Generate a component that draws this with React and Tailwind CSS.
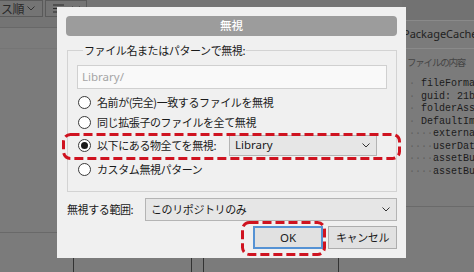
import React from "react";

function Chevron({ className = "" }) {
  return (
    <svg width="8" height="5" viewBox="0 0 8 5" className={className}>
      <path d="M0.5 0.5 L4 4 L7.5 0.5" fill="none" stroke="currentColor" strokeWidth="1" />
    </svg>
  );
}

function Radio({ checked }) {
  return (
    <span className="ml-[1px] w-[13px] h-[13px] rounded-full border border-[#3a3a3a] bg-white flex items-center justify-center shrink-0">
      {checked && <span className="w-[7px] h-[7px] rounded-full bg-[#1a1a1a]" />}
    </span>
  );
}

function Select({ text, className = "" }) {
  return (
    <div
      className={`flex items-center justify-between border border-[#b4b4b4] bg-[#e6e6e6] pl-[5px] pr-[6px] ${className}`}
    >
      <span className="leading-none">{text}</span>
      <Chevron className="text-[#333]" />
    </div>
  );
}

function DashBox({ className, w, h }) {
  return (
    <svg width={w} height={h} className={`absolute ${className}`} viewBox={`0 0 ${w} ${h}`}>
      <rect
        x="1.5"
        y="1.5"
        width={w - 3}
        height={h - 3}
        rx="7"
        fill="none"
        stroke="#cf1320"
        strokeWidth="3"
        strokeDasharray="9 4"
      />
    </svg>
  );
}

const code = [
  { ind: false, t: "fileFormatVersion: 2" },
  { ind: false, t: "guid: 21b4c7e0a9" },
  { ind: false, t: "folderAsset: yes" },
  { ind: false, t: "DefaultImporter:" },
  { ind: true, t: "externalObjects: {}" },
  { ind: true, t: "userData:" },
  { ind: true, t: "assetBundleName:" },
  { ind: true, t: "assetBundleVariant:" },
];

export default function App() {
  return (
    <div className="relative w-[474px] h-[272px] overflow-hidden bg-[#7b7b7b] font-['Noto_Sans_CJK_JP',sans-serif] text-[#1e1e1e]">
      <div className="flex h-full">
        {/* left panel */}
        <div className="w-[402px] flex flex-col shrink-0">
          <div className="h-[29px] border-b border-[#686868] bg-[#747474] flex items-start gap-[2px]">
            <div className="h-[17px] w-[44px] ml-[-1px] border border-[#5a5a5a] flex items-center justify-between pl-[1px] pr-[7px] text-[12px] text-[#2a2a2a]">
              <span className="leading-none tracking-[-0.5px]">ス順</span>
              <Chevron className="text-[#333]" />
            </div>
            <div className="h-[17px] w-[42px] border border-[#5a5a5a] flex items-center justify-between pl-[7px] pr-[6px] text-[#2a2a2a]">
              <svg width="11" height="9" viewBox="0 0 11 9">
                <path d="M0 1 H11 M0 4.5 H11 M0 8 H11" stroke="#2a2a2a" strokeWidth="1.2" />
              </svg>
              <Chevron className="text-[#333]" />
            </div>
          </div>
          <div className="h-[21px] border-b border-[#757575]" />
          <div className="h-[189px] border-b border-[#696969]" />
          <div className="pt-[19px] flex">
            <div className="ml-[73px] w-[119px] h-[20px] border-t-2 border-x border-[#333]" />
            <div className="ml-[11px] w-[136px] h-[20px] border-t-2 border-x border-[#333]" />
          </div>
        </div>
        {/* right panel */}
        <div className="flex-1 flex flex-col">
          <div className="h-[21px] bg-[#727272] border-b border-[#8a8a8a]" />
          <div className="h-[28px] border-b border-[#8a8a8a] flex items-center pl-[1px] font-['Noto_Sans',sans-serif] text-[11px] text-[#222] whitespace-nowrap">
            PackageCache
          </div>
          <div className="mt-[7px] h-[12px] leading-[12px] pl-[5px] text-[9.5px] tracking-[-1.2px] text-[#444] whitespace-nowrap">
            ファイルの内容
          </div>
          <div className="mt-[10px] h-[129px] border-b border-[#6a6a6a] pl-[7px] font-['Liberation_Mono',monospace] text-[10px] leading-[12.5px] text-[#1b1b1b] whitespace-pre">
            {code.map((l, i) => (
              <div key={i}>
                <span className="text-[#606060]">{l.ind ? "····" : "· "}</span>
                {l.t}
              </div>
            ))}
          </div>
        </div>
      </div>

      {/* dialog */}
      <div className="absolute left-[57px] top-[7px] w-[349px] h-[251px] bg-[#f0f0f0] flex flex-col px-[9px] pt-[9px] text-[11px] tracking-[-0.4px] text-[#1a1a1a]">
        <div className="h-[20px] rounded-[4px] bg-[#9c9c9c] flex items-center justify-center text-white text-[11.5px] font-medium tracking-normal">
          無視
        </div>
        <fieldset className="mt-[6px] ml-[1px] border border-[#d3d3d3] px-[9px] pb-[12px]">
          <legend className="ml-[6px] px-[1px] leading-[16px]">ファイル名またはパターンで無視:</legend>
          <div className="mt-[7px] h-[24px] border border-[#d0d0d0] bg-[#f9f9f9] flex items-center pl-[4px] font-['Noto_Sans',sans-serif] text-[11.5px] tracking-normal text-[#a5a5a5]">
            Library/
          </div>
          <div className="mt-[3px] flex flex-col">
            <div className="h-[20px] flex items-center gap-[6px]">
              <Radio />
              <span>名前が(完全)一致するファイルを無視</span>
            </div>
            <div className="h-[20px] flex items-center gap-[6px]">
              <Radio />
              <span>同じ拡張子のファイルを全て無視</span>
            </div>
            <div className="mt-[1px] h-[24px] flex items-center gap-[6px]">
              <Radio checked />
              <span className="w-[126px] shrink-0 whitespace-nowrap">以下にある物全てを無視:</span>
              <Select
                text="Library"
                className="w-[148px] h-[21px] font-['Noto_Sans',sans-serif] text-[11.5px] tracking-normal"
              />
            </div>
            <div className="mt-[2px] h-[20px] flex items-center gap-[6px]">
              <Radio />
              <span>カスタム無視パターン</span>
            </div>
          </div>
        </fieldset>
        <div className="mt-[6px] h-[23px] ml-[1px] flex items-center">
          <span className="w-[78px] shrink-0 whitespace-nowrap">無視する範囲:</span>
          <Select text="このリポジトリのみ" className="flex-1 h-[23px]" />
        </div>
        <div className="mt-[5px] h-[23px] flex justify-end gap-[5px]">
          <div className="w-[70px] h-[23px] border-2 border-[#5592d4] bg-[#e1e1e1] flex items-center justify-center font-['Noto_Sans',sans-serif] text-[11.5px] tracking-normal">
            OK
          </div>
          <div className="w-[69px] h-[23px] border border-[#adadad] bg-[#e1e1e1] flex items-center justify-center">
            キャンセル
          </div>
        </div>

        <DashBox className="left-[5px] top-[126px]" w={339} h={27} />
        <DashBox className="left-[184px] top-[214px]" w={85} h={35} />
      </div>
    </div>
  );
}
